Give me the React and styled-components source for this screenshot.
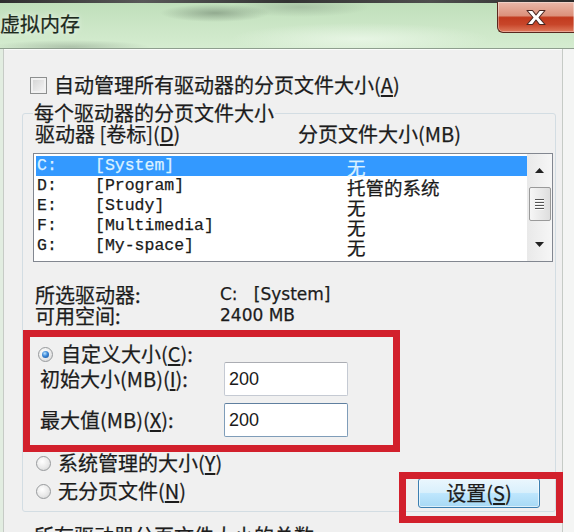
import React from 'react'
import styled, { createGlobalStyle } from 'styled-components'

const CJK = `"Noto Sans CJK SC", "Liberation Sans", sans-serif`
const MONO = `"Liberation Mono", "Noto Sans CJK SC", monospace`
const SANS = `"DejaVu Sans", "Liberation Sans", sans-serif`

const GlobalStyle = createGlobalStyle`
  html, body { margin: 0; padding: 0; background: #f0f0f0; }
  body { font-family: ${CJK}; }
`

// window chrome
const Window = styled.div`
  width: 574px;
  height: 532px;
  overflow: hidden;
  display: flex;
  flex-direction: column;
  font-family: ${CJK};
  color: #1c1c1c;
  background: #f0f0f0;
  -webkit-text-stroke: 0.25px currentColor;
`
const TopStrip = styled.div`
  height: 3px;
  flex-shrink: 0;
  background: linear-gradient(90deg, #2e2e2e, #585858 25%, #333 50%, #4e4e4e 75%, #2a2a2a);
`
const TitleBar = styled.div`
  height: 45px;
  flex-shrink: 0;
  display: flex;
  justify-content: space-between;
  align-items: flex-start;
  background:
    radial-gradient(ellipse 55px 9px at 215px 10px, rgba(105, 125, 105, 0.55), transparent),
    radial-gradient(ellipse 80px 7px at 70px 44px, rgba(115, 135, 115, 0.4), transparent),
    radial-gradient(ellipse 70px 10px at 300px 4px, rgba(120, 140, 120, 0.35), transparent),
    radial-gradient(ellipse 130px 16px at 360px 36px, rgba(240, 250, 238, 0.7), transparent),
    linear-gradient(180deg, #c0dfbb 0%, #cbe6c6 50%, #d5ecd0 100%);
`
const Title = styled.div`
  margin: 11px 0 0 0;
  font-size: 20px;
  line-height: 20px;
  color: #1d2a1d;
  text-shadow: 0 0 6px rgba(255, 255, 255, 0.9);
`
const CloseButton = styled.div`
  width: 77px;
  height: 31px;
  margin-top: -1px;
  box-sizing: border-box;
  border: 1px solid #5a271e;
  border-top: none;
  border-right: none;
  border-radius: 0 0 0 6px;
  display: flex;
  align-items: center;
  justify-content: center;
  background: linear-gradient(180deg, #eab8a9 0%, #dc917b 45%, #c23a1e 52%, #c8462a 75%, #df7a5c 100%);
  box-shadow: inset 0 0 0 1px rgba(255, 255, 255, 0.35);
`
const Body = styled.div`
  flex: 1;
  display: flex;
  min-height: 0;
  border-top: 1px solid #8e9e8e;
  box-shadow: inset 0 1px 0 #fbfdfb;
`
const SideFrame = styled.div`
  flex-shrink: 0;
  width: ${p => p.$w}px;
  background: ${p => p.$bg};
  border-${p => p.$side}: 1px solid #c6cbc6;
`
const Content = styled.div`
  flex: 1;
  min-width: 0;
  padding-left: 18px;
  display: flex;
  flex-direction: column;
`

// small controls
const Key = styled.u`
  text-underline-offset: 2px;
`
const CheckRow = styled.div`
  margin: 26px 0 0 8px;
  display: flex;
  align-items: center;
  gap: 7px;
  font-size: 20px;
  line-height: 20px;
  height: 20px;
`
const Checkbox = styled.span`
  width: 15px;
  height: 15px;
  border: 1px solid #8d8f8f;
  background: linear-gradient(135deg, #d2d2d2, #f7f7f7);
  box-shadow: inset 0 0 0 2px #f1f1f1;
`
const Radio = styled.span`
  position: relative;
  width: 15px;
  height: 15px;
  flex-shrink: 0;
  box-sizing: border-box;
  border-radius: 50%;
  border: 1px solid #979a9c;
  background: radial-gradient(circle at 40% 35%, #ffffff 0%, #e9e9e9 55%, #cfd0d1 100%);
  &::after {
    content: '';
    display: ${p => (p.$checked ? 'block' : 'none')};
    position: absolute;
    left: 3px;
    top: 3px;
    width: 7px;
    height: 7px;
    border-radius: 50%;
    background: radial-gradient(circle at 40% 35%, #b9e3ff 0%, #3b86d6 45%, #174d95 100%);
  }
`
const RadioRow = styled.div`
  display: flex;
  align-items: center;
  gap: ${p => p.$gap || 8}px;
  height: ${p => p.$h || 22}px;
  padding-left: ${p => p.$pl || 0}px;
  margin-top: ${p => p.$mt || 0}px;
  font-size: 20px;
  line-height: 20px;
`

// group box
const GroupBox = styled.fieldset`
  margin: ${p => p.$mt}px 0 0 0;
  width: 534px;
  box-sizing: border-box;
  min-width: 0;
  padding: 0 2px 3px 10px;
  border: 1px solid #d3dde3;
  border-radius: 3px;
`
const Legend = styled.legend`
  padding: 0 1px;
  font-size: 20px;
  line-height: 20px;
`
const HeaderRow = styled.div`
  display: grid;
  grid-template-columns: 263px 1fr;
  padding-left: 2px;
  height: 22px;
  margin-bottom: 8px;
  font-size: 20px;
  line-height: 22px;
`

// list box
const ListBox = styled.div`
  height: 109px;
  box-sizing: border-box;
  border: 1px solid #828790;
  background: #fff;
  display: flex;
`
const Rows = styled.div`
  flex: 1;
  padding: 2px 0 0 2px;
`
const Row = styled.div`
  display: grid;
  grid-template-columns: 58px 252px 1fr;
  height: 20px;
  padding-left: 1px;
  font-family: ${MONO};
  font-size: 16.5px;
  line-height: 20px;
  background: ${p => (p.$selected ? '#3399ff' : 'transparent')};
  color: ${p => (p.$selected ? '#dcf2ff' : '#1a1a1a')};
  white-space: pre;
`
const SizeCell = styled.span`
  font-family: ${CJK};
  font-size: 18.5px;
  line-height: 20px;
  padding-top: 1px;
`
const ScrollBar = styled.div`
  width: 25px;
  display: flex;
  flex-direction: column;
  align-items: center;
  background: linear-gradient(90deg, #e9e9e9, #f6f6f6);
`
const ArrowBox = styled.div`
  height: 33px;
  display: flex;
  align-items: center;
  justify-content: center;
`
const Thumb = styled.div`
  width: 22px;
  height: 34px;
  box-sizing: border-box;
  border: 1px solid #9a9a9a;
  border-radius: 2px;
  background: linear-gradient(90deg, #f6f6f6, #dedede);
  display: flex;
  flex-direction: column;
  align-items: center;
  justify-content: center;
  gap: 2px;
`
const Grip = styled.span`
  width: 9px;
  height: 1px;
  background: #555;
  box-shadow: 0 1px 0 #fff;
`
const Track = styled.div`
  flex: 1;
`

// drive info
const InfoGrid = styled.div`
  margin-top: 22px;
  padding-left: 2px;
  display: grid;
  grid-template-columns: 185px 1fr;
  grid-auto-rows: 21px;
  font-size: 20px;
  line-height: 21px;
`
const InfoValue = styled.span`
  font-family: ${SANS};
  font-size: 17px;
  white-space: pre;
`

// custom size area
const RedBox = styled.div`
  margin: 4px 0 0 -10px;
  width: 377px;
  box-sizing: border-box;
  border: 7px solid #d2202c;
  padding: 7px 0 8px 0;
`
const SizeRow = styled.div`
  display: grid;
  grid-template-columns: 184px 124px;
  align-items: center;
  padding-left: 10px;
  margin-top: ${p => p.$mt}px;
  font-size: 20px;
  line-height: 20px;
`
const SizeInput = styled.input`
  width: 124px;
  height: 34px;
  box-sizing: border-box;
  border: 1px solid ${p => (p.$hover ? '#7f9db9' : '#c5cad3')};
  border-top-color: ${p => (p.$hover ? '#5f7f9f' : '#abadb3')};
  border-radius: 2px;
  padding: 0 4px;
  font-family: "Liberation Sans", sans-serif;
  font-size: 18px;
  color: #1a1a1a;
  background: #fff;
  outline: none;
  -webkit-text-stroke: 0;
`

// bottom part with radios and set button
const BottomSection = styled.div`
  display: flex;
  justify-content: space-between;
  align-items: flex-end;
`
const RadioColumn = styled.div`
  padding: 0 0 6px 3px;
`
const ButtonWrap = styled.div`
  position: relative;
  margin-right: 13px;
  &::after {
    content: '';
    position: absolute;
    top: -6px;
    left: -19px;
    right: -23px;
    bottom: -15px;
    border: 7px solid #d2202c;
    z-index: 2;
  }
`
const SetButton = styled.div`
  width: 122px;
  height: 30px;
  box-sizing: border-box;
  border: 1px solid #3c7fb1;
  border-radius: 3px;
  background: linear-gradient(180deg, #eaf6fd 0%, #d9f0fc 48%, #bee6fd 52%, #a7d9f5 100%);
  box-shadow: inset 0 0 0 1px rgba(255, 255, 255, 0.6);
  display: flex;
  align-items: center;
  justify-content: center;
  font-size: 20px;
  line-height: 20px;
`

const drives = [
  { letter: 'C:', label: '[System]', size: '无', selected: true },
  { letter: 'D:', label: '[Program]', size: '托管的系统' },
  { letter: 'E:', label: '[Study]', size: '无' },
  { letter: 'F:', label: '[Multimedia]', size: '无' },
  { letter: 'G:', label: '[My-space]', size: '无' },
]

function CloseIcon() {
  return (
    <svg width="22" height="17" viewBox="0 0 22 17">
      <path
        d="M2 1.5 L7.5 1.5 L11 6 L14.5 1.5 L20 1.5 L14 8.5 L20 15.5 L14.5 15.5 L11 11 L7.5 15.5 L2 15.5 L8 8.5 Z"
        fill="#fff"
        stroke="#4a2620"
        strokeWidth="1.1"
        strokeLinejoin="round"
      />
    </svg>
  )
}

function Arrow({ up }) {
  return (
    <svg width="9" height="5" viewBox="0 0 9 5">
      <path d={up ? 'M0 5 L4.5 0 L9 5 Z' : 'M0 0 L4.5 5 L9 0 Z'} fill="#222" />
    </svg>
  )
}

export default function App() {
  return (
    <>
      <GlobalStyle />
      <Window>
        <TopStrip />
        <TitleBar>
          <Title>虚拟内存</Title>
          <CloseButton>
            <CloseIcon />
          </CloseButton>
        </TitleBar>
        <Body>
          <SideFrame $w={3} $bg="#e2ede1" $side="right" />
          <Content>
            <CheckRow>
              <Checkbox />
              <span>自动管理所有驱动器的分页文件大小(<Key>A</Key>)</span>
            </CheckRow>

            <GroupBox $mt={8}>
              <Legend>每个驱动器的分页文件大小</Legend>
              <HeaderRow>
                <span>驱动器 [卷标](<Key>D</Key>)</span>
                <span>分页文件大小(MB)</span>
              </HeaderRow>
              <ListBox>
                <Rows>
                  {drives.map(d => (
                    <Row key={d.letter} $selected={d.selected}>
                      <span>{d.letter}</span>
                      <span>{d.label}</span>
                      <SizeCell>{d.size}</SizeCell>
                    </Row>
                  ))}
                </Rows>
                <ScrollBar>
                  <ArrowBox><Arrow up /></ArrowBox>
                  <Thumb>
                    <Grip /><Grip /><Grip /><Grip />
                  </Thumb>
                  <Track />
                  <ArrowBox><Arrow /></ArrowBox>
                </ScrollBar>
              </ListBox>

              <InfoGrid>
                <span>所选驱动器:</span>
                <InfoValue>C:   [System]</InfoValue>
                <span>可用空间:</span>
                <InfoValue>2400 MB</InfoValue>
              </InfoGrid>

              <RedBox>
                <RadioRow $h={20} $pl={8} $gap={8}>
                  <Radio $checked />
                  <span>自定义大小(<Key>C</Key>):</span>
                </RadioRow>
                <SizeRow $mt={-2}>
                  <span>初始大小(MB)(<Key>I</Key>):</span>
                  <SizeInput defaultValue="200" readOnly />
                </SizeRow>
                <SizeRow $mt={7}>
                  <span>最大值(MB)(<Key>X</Key>):</span>
                  <SizeInput defaultValue="200" readOnly $hover />
                </SizeRow>
              </RedBox>

              <BottomSection>
                <RadioColumn>
                  <RadioRow $gap={7}>
                    <Radio />
                    <span>系统管理的大小(<Key>Y</Key>)</span>
                  </RadioRow>
                  <RadioRow $gap={7} $mt={6}>
                    <Radio />
                    <span>无分页文件(<Key>N</Key>)</span>
                  </RadioRow>
                </RadioColumn>
                <ButtonWrap>
                  <SetButton>设置(<Key>S</Key>)</SetButton>
                </ButtonWrap>
              </BottomSection>
            </GroupBox>

            <GroupBox $mt={14}>
              <Legend>所有驱动器分页文件大小的总数</Legend>
            </GroupBox>
          </Content>
          <SideFrame $w={11} $bg="#f4f5f4" $side="left" />
        </Body>
      </Window>
    </>
  )
}
